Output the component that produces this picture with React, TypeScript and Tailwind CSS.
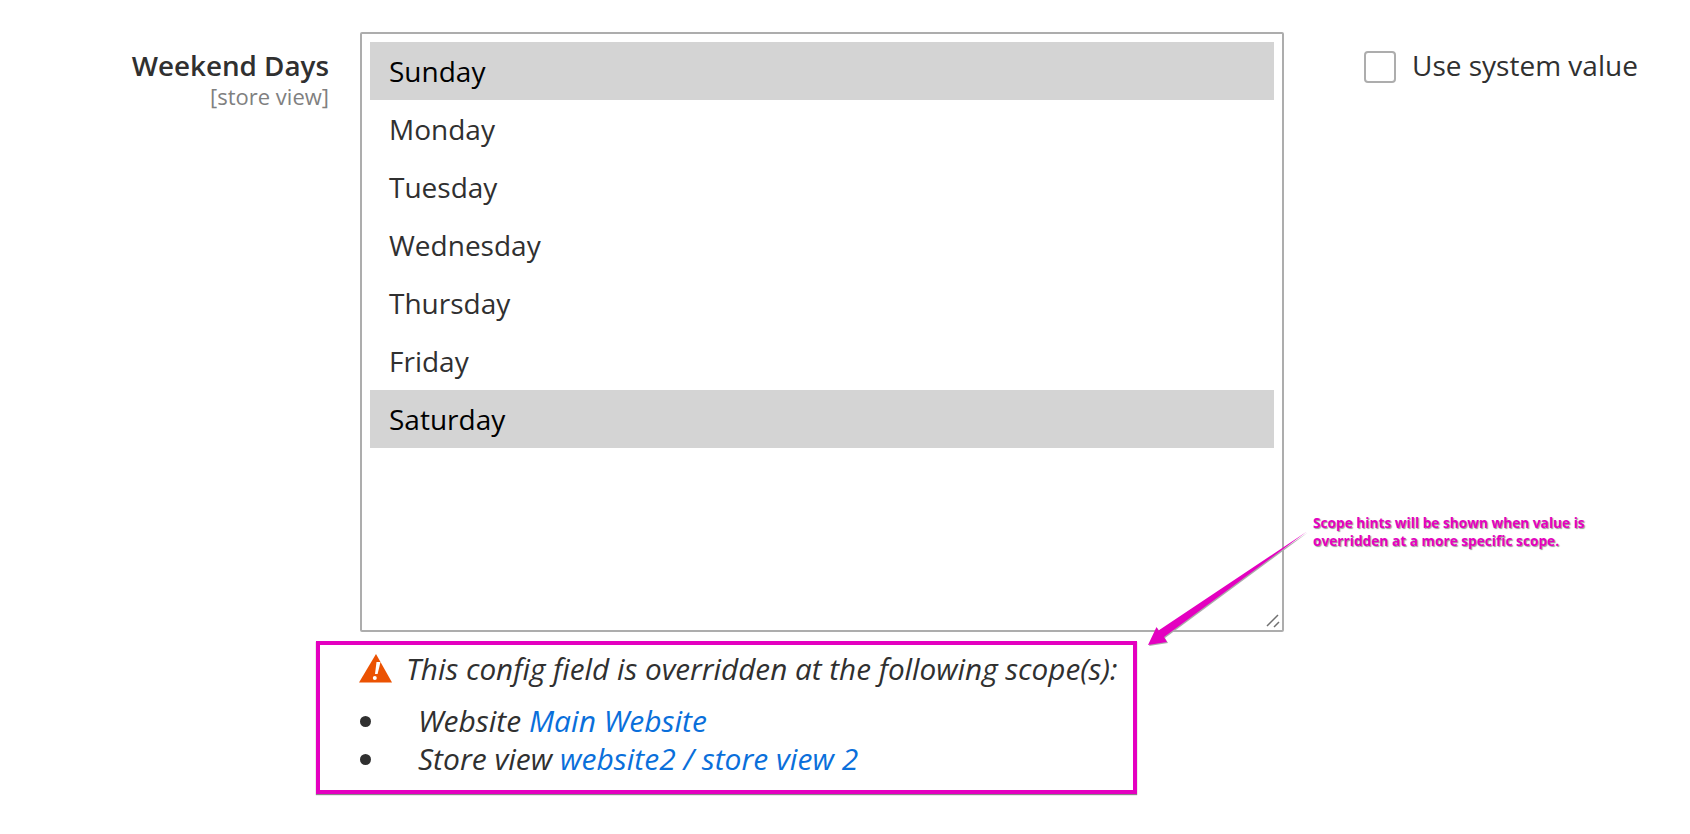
const days = [
  { name: "Sunday", selected: true },
  { name: "Monday", selected: false },
  { name: "Tuesday", selected: false },
  { name: "Wednesday", selected: false },
  { name: "Thursday", selected: false },
  { name: "Friday", selected: false },
  { name: "Saturday", selected: true },
];

const App = () => {
  return (
    <main className="relative h-[834px] w-[1690px] overflow-hidden bg-white pt-8 font-['Open_Sans',sans-serif] text-[#303030]">
      {/* Config row */}
      <div className="flex items-start">
        <div className="w-[329px] pt-[15px] text-right">
          <p className="text-[27.8px] leading-[37px] font-semibold">Weekend Days</p>
          <p className="text-[22px] leading-[24px] text-[#808080]">[store view]</p>
        </div>

        <div className="relative ml-[31px] h-[600px] w-[924px] rounded-[2px] border-2 border-[#adadad] px-2 pt-2">
          {days.map((day) => (
            <div
              key={day.name}
              className={`flex h-[58px] items-center px-[19px] text-[28px] ${day.selected ? "bg-[#d4d4d4] text-black" : ""}`}
            >
              {day.name}
            </div>
          ))}
          {/* Resize grip */}
          <svg className="absolute right-[1px] bottom-[1px]" width="16" height="16" viewBox="0 0 16 16">
            <path d="M2 13L13 2M9 14L14 9" stroke="#707070" strokeWidth="1.5" fill="none" />
          </svg>
        </div>

        <div className="ml-[80px] flex items-center gap-[16px] pt-[19px]">
          <span className="h-8 w-8 rounded-[4px] border-2 border-[#adadad] bg-white" />
          <span className="-mt-[4px] text-[28px] leading-[32px]">Use system value</span>
        </div>
      </div>

      {/* Override notice */}
      <div className="mt-[9px] ml-[316px] h-[153px] w-[821px] border-4 border-[#e400c0] pt-[4px] pl-[38px] italic shadow-[0_1px_1px_#888]">
        <div className="flex items-center gap-[14px] text-[29.7px] leading-[40px]">
          <svg width="33" height="29" viewBox="0 0 33 29" className="-mt-[2px] ml-[1px]">
            <path d="M17 0L33 28.5H0Z" fill="#eb5202" />
            <path d="M17.5 8H21.5L18.6 20H16Z" fill="#fff" />
            <circle cx="15.8" cy="24" r="2" fill="#fff" />
          </svg>
          <span>This config field is overridden at the following scope(s):</span>
        </div>
        <ul className="mt-[13px] text-[30px] leading-[38px]">
          <li className="flex items-center">
            <span className="ml-[2px] h-[11px] w-[11px] rounded-full bg-[#303030]" />
            <span className="ml-[47px]">
              Website <a className="text-[#0a6fdb]">Main Website</a>
            </span>
          </li>
          <li className="flex items-center">
            <span className="ml-[2px] h-[11px] w-[11px] rounded-full bg-[#303030]" />
            <span className="ml-[47px]">
              Store view <a className="text-[#0a6fdb]">website2 / store view 2</a>
            </span>
          </li>
        </ul>
      </div>

      {/* Annotation */}
      <svg className="absolute top-0 left-0 drop-shadow-[1px_1px_0_#aaa]" width="1690" height="834" viewBox="0 0 1690 834">
        <path d="M1307 531.5L1164 637L1167 642L1148 645L1156.5 627L1158.5 630.5Z" fill="#e400c0" />
      </svg>
      <p
        className="absolute top-[514px] left-[1313px] text-[13.7px] leading-[17.5px] font-bold text-[#e400c0]"
        style={{ textShadow: "1px 1px 1px #999" }}
      >
        Scope hints will be shown when value is
        <br />
        overridden at a more specific scope.
      </p>
    </main>
  );
};

export default App;
